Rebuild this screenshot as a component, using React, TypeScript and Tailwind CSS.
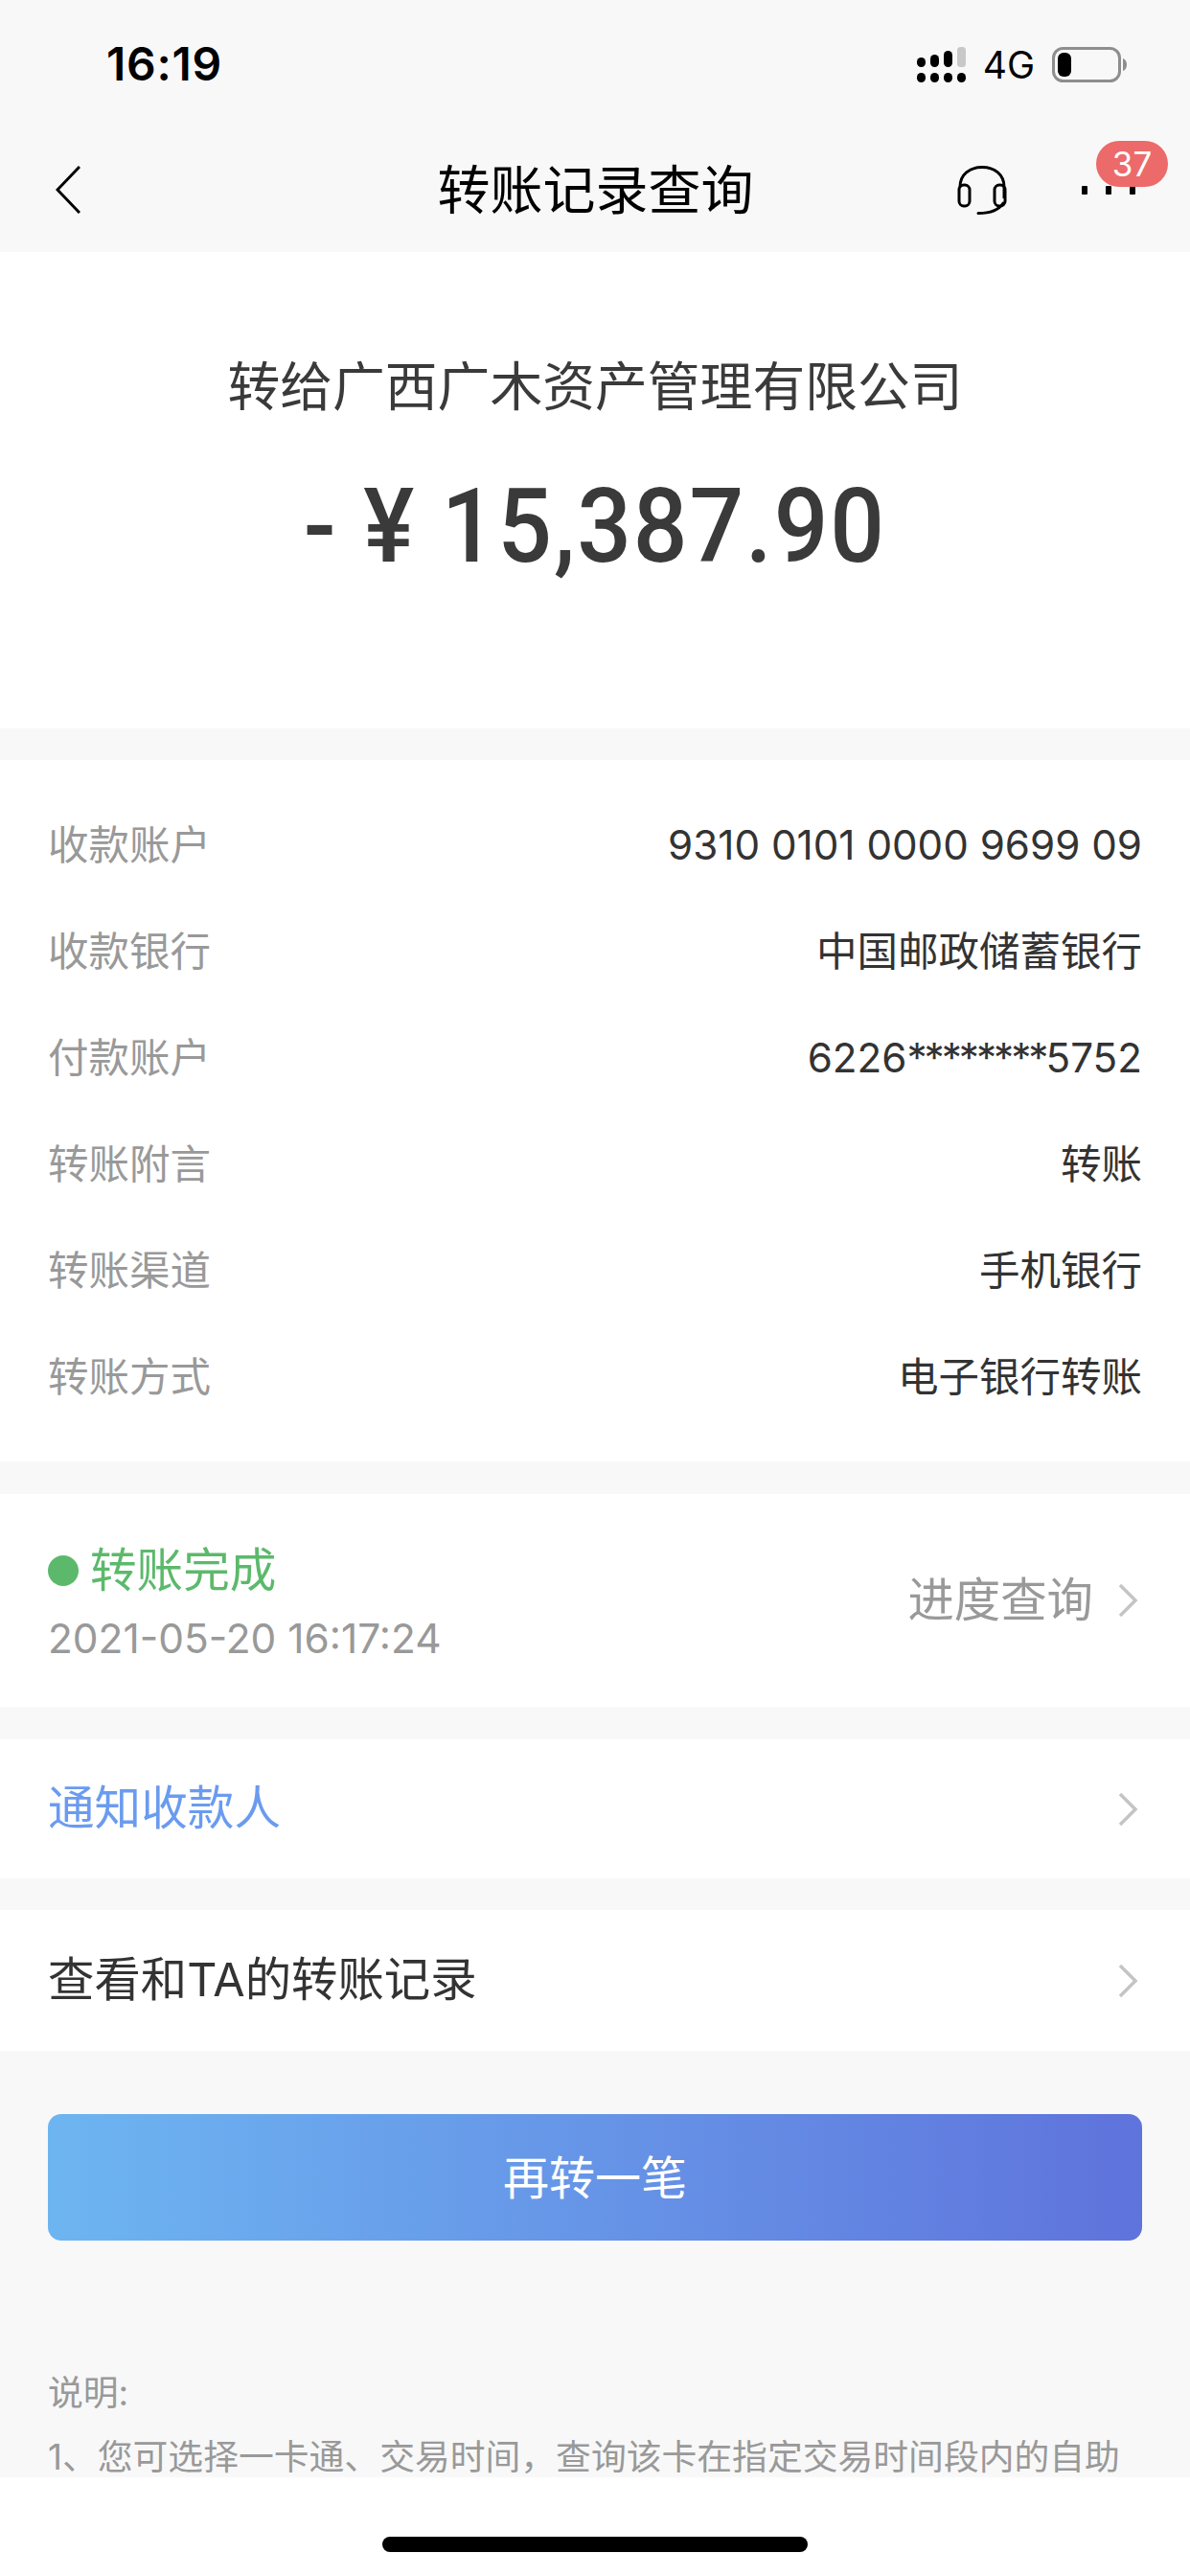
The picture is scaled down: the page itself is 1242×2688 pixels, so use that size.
const FONT = "font-['Inter','Noto_Sans_CJK_SC',sans-serif]";

const details = [
  { label: "收款账户", value: <span className="text-[42.2px]">9310 0101 0000 9699 09</span> },
  { label: "收款银行", value: "中国邮政储蓄银行" },
  {
    label: "付款账户",
    value: (
      <span className="text-[42.2px]">
        6226<span className="tracking-[-3px]">********</span>5752
      </span>
    ),
  },
  { label: "转账附言", value: "转账" },
  { label: "转账渠道", value: "手机银行" },
  { label: "转账方式", value: "电子银行转账" },
];

function Chevron({ className = "" }: { className?: string }) {
  return (
    <svg width="24" height="36" viewBox="0 0 24 36" fill="none" className={className}>
      <path d="M4 2 L20 18 L4 34" stroke="#c4c4c4" strokeWidth="3.5" />
    </svg>
  );
}

function Signal() {
  return (
    <svg width="51" height="37" viewBox="0 0 51 37">
      <rect x="0" y="11" width="9" height="10" rx="4.5" fill="#000" />
      <rect x="14" y="8" width="9" height="13" rx="4.5" fill="#000" />
      <rect x="28" y="4" width="9" height="17" rx="4.5" fill="#000" />
      <rect x="42" y="0" width="9" height="21" rx="3.5" fill="#c8c8c8" />
      <rect x="0" y="27" width="9" height="10" rx="4.5" fill="#000" />
      <rect x="14" y="27" width="9" height="10" rx="4.5" fill="#000" />
      <rect x="28" y="27" width="9" height="10" rx="4.5" fill="#000" />
      <rect x="42" y="27" width="9" height="10" rx="4.5" fill="#000" />
    </svg>
  );
}

function Battery() {
  return (
    <svg width="79" height="37" viewBox="0 0 79 37">
      <rect x="1.5" y="1.5" width="69" height="34" rx="10" fill="none" stroke="#8e8e8e" strokeWidth="3" />
      <rect x="6" y="6" width="14" height="25" rx="6" fill="#000" />
      <path d="M74 12 C77 13 78 16 78 18.5 C78 21 77 24 74 25 Z" fill="#8e8e8e" />
    </svg>
  );
}

function Headset() {
  return (
    <svg width="52" height="51" viewBox="0 0 52 51" fill="none" stroke="#000" strokeWidth="3">
      <path d="M3 22 C3 9 13 1.5 26 1.5 C39 1.5 49 9 49 22 V34" />
      <rect x="2" y="20" width="11" height="22" rx="5" />
      <rect x="39" y="20" width="11" height="22" rx="5" />
      <path d="M22 49.5 C34 49.5 43 47 48 39" strokeLinecap="round" />
    </svg>
  );
}

export default function App() {
  return (
    <div className={`${FONT} flex h-[2688px] w-[1242px] flex-col overflow-hidden bg-[#f8f8f8]`}>
      <div className="flex-1 overflow-hidden">
        {/* status bar */}
        <div className="flex h-[134px] items-center justify-between pl-[111px] pr-[65px]">
          <span className="text-[48px] font-semibold leading-none tracking-[0.7px] text-black">16:19</span>
          <div className="flex items-center">
            <Signal />
            <span className="ml-[18px] mr-[18px] text-[39px] leading-none text-black">4G</span>
            <Battery />
          </div>
        </div>

        {/* nav */}
        <div className="relative grid h-[129px] grid-cols-[1fr_auto_1fr] items-center pl-[58px] pr-[57px]">
          <svg width="26" height="50" viewBox="0 0 26 50" fill="none" className="-translate-y-[1px]">
            <path d="M25 1 L2 25 L25 49" stroke="#000" strokeWidth="3" />
          </svg>
          <span className="text-[55px] leading-none text-black">转账记录查询</span>
          <div className="flex items-center justify-end gap-[78px]">
            <Headset />
            <div className="flex gap-[19px]">
              <span className="h-[9px] w-[6px] rounded-[1px] bg-black" />
              <span className="h-[9px] w-[6px] rounded-[1px] bg-black" />
              <span className="h-[9px] w-[6px] rounded-[1px] bg-black" />
            </div>
          </div>
          <span className="absolute right-[23px] top-[13px] flex h-[48px] w-[75px] items-center justify-center rounded-full bg-[#ec6a6a] text-[35px] leading-none text-white">
            37
          </span>
        </div>

        {/* amount */}
        <div className="flex h-[497px] flex-col items-center bg-white pt-[111px]">
          <p className="text-[54.8px] leading-[58px] text-[#3a3a3a]">转给广西广木资产管理有限公司</p>
          <p className="mt-[59px] origin-center scale-x-[0.925] font-['Roboto',sans-serif] text-[108px] font-medium leading-[116px] tracking-[2px] text-[#3a3a3a]">
            - ¥ 15,387.90
          </p>
        </div>

        {/* details */}
        <div className="mt-[33px] bg-white py-[33px]">
          {details.map((row) => (
            <div key={row.label} className="flex h-[111px] items-center justify-between px-[50px] text-[42.5px]">
              <span className="text-[#999]">{row.label}</span>
              <span className="text-[#333]">{row.value}</span>
            </div>
          ))}
        </div>

        {/* status */}
        <div className="mt-[34px] flex h-[222px] items-center justify-between bg-white pl-[50px] pr-[53px]">
          <div className="pt-[4px]">
            <div className="flex items-center gap-[12px]">
              <span className="h-[32px] w-[32px] rounded-full bg-[#5cb96b]" />
              <span className="text-[48.6px] leading-[60px] text-[#5cb96b]">转账完成</span>
            </div>
            <p className="mt-[16px] text-[42.4px] leading-[50px] text-[#999]">2021-05-20 16:17:24</p>
          </div>
          <div className="flex items-center gap-[24px]">
            <span className="text-[48.4px] text-[#999]">进度查询</span>
            <Chevron />
          </div>
        </div>

        <div className="mt-[34px] flex h-[145px] items-center justify-between bg-white pl-[50px] pr-[53px]">
          <span className="text-[48.6px] text-[#6a9bf0]">通知收款人</span>
          <Chevron />
        </div>

        <div className="mt-[33px] flex h-[147px] items-center justify-between bg-white pl-[50px] pr-[53px]">
          <span className="text-[48.4px] text-[#333]">查看和TA的转账记录</span>
          <Chevron />
        </div>

        {/* action + note */}
        <div className="px-[50px] pt-[66px]">
          <button className="flex h-[132px] w-full items-center justify-center rounded-[14px] bg-gradient-to-r from-[#6db5f1] to-[#5f73dc] pt-[2px] text-[48px] text-white">
            再转一笔
          </button>
          <p className="mt-[125px] text-[36.8px] leading-[67px] text-[#999]">说明:</p>
          <p className="whitespace-nowrap text-[36.8px] leading-[67px] text-[#999]">
            1、您可选择一卡通、交易时间，查询该卡在指定交易时间段内的自助
          </p>
        </div>
      </div>

      {/* home indicator */}
      <div className="flex h-[103px] shrink-0 justify-center bg-white pt-[62px]">
        <div className="h-[16px] w-[444px] rounded-full bg-black" />
      </div>
    </div>
  );
}
